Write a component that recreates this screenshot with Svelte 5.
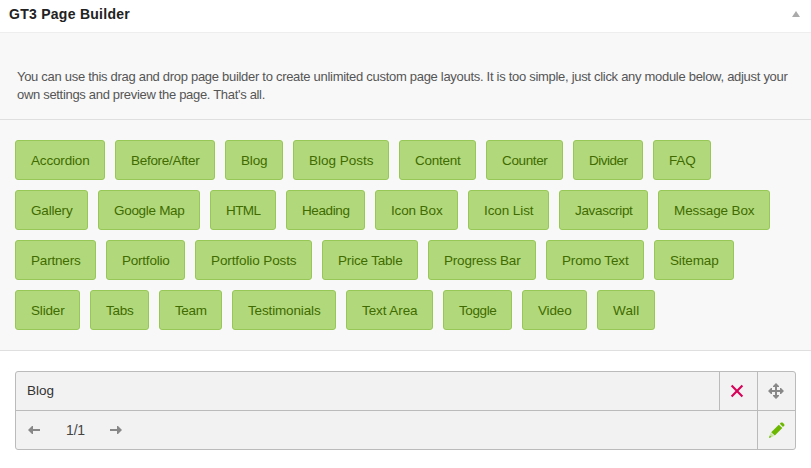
<script>
  // label and button width in px
  const modules = [
    ['Accordion', 90], ['Before/After', 100], ['Blog', 58], ['Blog Posts', 96],
    ['Content', 77], ['Counter', 77], ['Divider', 70], ['FAQ', 58],
    ['Gallery', 73], ['Google Map', 102], ['HTML', 66], ['Heading', 79],
    ['Icon Box', 83], ['Icon List', 81], ['Javascript', 89], ['Message Box', 112],
    ['Partners', 81], ['Portfolio', 79], ['Portfolio Posts', 117], ['Price Table', 96],
    ['Progress Bar', 108], ['Promo Text', 98], ['Sitemap', 80],
    ['Slider', 65], ['Tabs', 59], ['Team', 63], ['Testimonials', 104],
    ['Text Area', 87], ['Toggle', 69], ['Video', 65], ['Wall', 58]
  ];

  // Spreads a label's letters over the given width
  function fit(node, width) {
    const natural = node.getBoundingClientRect().width;
    node.style.letterSpacing = `${(width - natural) / node.textContent.length}px`;
  }
</script>

<section class="builder">
  <header>
    <h3><span use:fit={121}>GT3 Page Builder</span></h3>
    <svg width="8" height="6" viewBox="0 0 8 6"><path d="M4 0 8 6H0Z" fill="#aaa" /></svg>
  </header>

  <div class="intro">
    <div><span use:fit={770.5}>You can use this drag and drop page builder to create unlimited custom page layouts. It is too simple, just click any module below, adjust your</span></div>
    <div><span use:fit={248}>own settings and preview the page. That's all.</span></div>
  </div>

  <div class="modules">
    {#each modules as [label, width]}
      <button style="width: {width}px"><span use:fit={width - 31.5}>{label}</span></button>
    {/each}
  </div>

  <div class="stage">
    <div class="module">
      <div class="row top">
        <div class="name"><span use:fit={27}>Blog</span></div>
        <div class="cell">
          <svg width="37" height="38" viewBox="0 0 37 38"><path d="M11.6 13.6 22.4 24.4M22.4 13.6 11.6 24.4" stroke="#d80058" stroke-width="2.1" fill="none" /></svg>
        </div>
        <div class="cell">
          <svg width="37" height="38" viewBox="0 0 37 38"><path d="M18 11 21 14V15H19V18H22V16H23L26 19 23 22H22V20H19V23H21V24L18 27 15 24V23H17V20H14V22H13L10 19 13 16H14V18H17V15H15V14Z" fill="#888" /></svg>
        </div>
      </div>
      <div class="row">
        <div class="sizer">
          <svg width="12" height="8" viewBox="0 0 12 8"><path d="M0 4 4 0H5V3H12V5H5V8H4Z" fill="#888" /></svg>
          <span class="size"><span use:fit={19}>1/1</span></span>
          <svg width="12" height="8" viewBox="0 0 12 8"><path d="M12 4 8 0H7V3H0V5H7V8H8Z" fill="#888" /></svg>
        </div>
        <div class="cell">
          <svg width="37" height="38" viewBox="0 0 37 38"><g fill="#6cb800"><path d="M13.2 21.2 20.8 13.7 24.3 17 16.8 24.5Z" /><path d="M21.8 12.7 23 11.5H24.5L26.3 13.3V14.6L25 16Z" /><path d="M12.7 21.8 16.1 25 11 27Z" fill="#c3e39a" /><path d="M11.8 24.5 13.4 26.1 11 27Z" /></g></svg>
        </div>
      </div>
    </div>
  </div>
</section>

<style>
  :global(body) { margin: 0; background: #fff; }
  .builder {
    height: 468px;
    overflow: hidden;
    font: 13px/18px "Liberation Sans", Arial, sans-serif;
    color: #444;
  }
  .builder span { white-space: nowrap; }
  header {
    box-sizing: border-box;
    height: 33px;
    padding: 0 11px 4px 9px;
    display: flex;
    align-items: center;
    justify-content: space-between;
    border-bottom: 1px solid #eee;
  }
  h3 { margin: 0; font-size: 14px; line-height: 20px; color: #222; }
  .intro {
    box-sizing: border-box;
    height: 87px;
    padding: 35px 0 0 17px;
    color: #555;
    background: #f8f8f8;
    border-bottom: 1px solid #dfdfdf;
  }
  .modules {
    box-sizing: border-box;
    height: 231px;
    padding: 20px 25px 20px 15px;
    display: flex;
    flex-wrap: wrap;
    align-content: flex-start;
    gap: 10px;
    background: #f8f8f8;
    border-bottom: 1px solid #dfdfdf;
  }
  button {
    box-sizing: border-box;
    height: 40px;
    padding: 1px 0 0 15px;
    text-align: left;
    font: 13.5px/18px "Liberation Sans", Arial, sans-serif;
    color: #3f6b00;
    background: #b1d87a;
    border: 1px solid #97c757;
    border-radius: 3px;
  }
  .stage { padding: 20px 15px 0; }
  .module {
    box-sizing: border-box;
    width: 781px;
    height: 79px;
    background: #f2f2f2;
    border: 1px solid #bbb;
    border-radius: 3px;
  }
  .row { display: flex; height: 38px; }
  .top { border-bottom: 1px solid #bbb; }
  .name { flex: 1; padding-left: 11px; font-size: 13.5px; line-height: 38px; color: #333; }
  .cell { display: flex; border-left: 1px solid #bbb; }
  .sizer { flex: 1; display: flex; align-items: center; padding-left: 12px; }
  .size { width: 44px; padding-left: 26px; font-size: 14px; color: #444; }
</style>
